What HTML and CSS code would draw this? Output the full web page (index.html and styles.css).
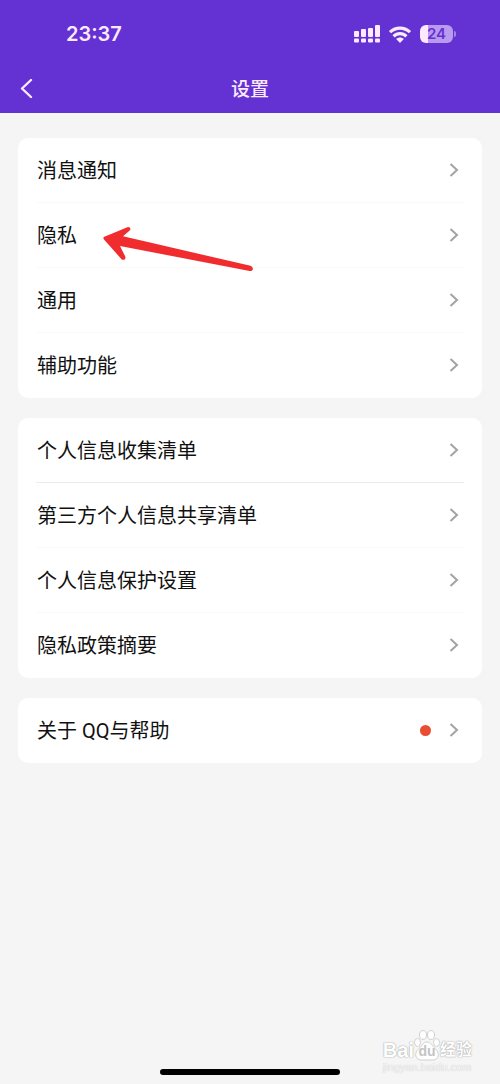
FILE: index.html
```
<!DOCTYPE html>
<html lang="zh-CN">
<head>
    <meta charset="UTF-8">
    <meta name="viewport" content="width=device-width, initial-scale=1.0">
    <title>设置</title>
    <link rel="stylesheet" href="styles.css">
</head>
<body>
    <header class="header">
        <div class="status-bar">
            <span class="time">23:37</span>
            <div class="status-icons">
                <svg class="signal" width="26" height="18" viewBox="0 0 26 18" fill="#fbeaff">
                    <rect x="0" y="6" width="5" height="6" rx="1"/>
                    <rect x="7" y="4" width="5" height="8" rx="1"/>
                    <rect x="14" y="3" width="5" height="9" rx="1"/>
                    <rect x="21" y="0" width="5" height="12" rx="1"/>
                    <rect x="0" y="13.5" width="5" height="4" rx="1"/>
                    <rect x="7" y="13.5" width="5" height="4" rx="1"/>
                    <rect x="14" y="13.5" width="5" height="4" rx="1"/>
                    <rect x="21" y="13.5" width="5" height="4" rx="1"/>
                </svg>
                <svg class="wifi" width="22" height="17" viewBox="0 0 22 17" fill="none" stroke="#fbeaff" stroke-width="3.2">
                    <path d="M1 6.2C6.800 .7 15.200 .7 21 6.200"/>
                    <path d="M4.600 10.400c3.700-3.700 9.100-3.700 12.800 0"/>
                    <path d="M7.200 12.900c2.200-2 5.400-2 7.600 0L11 16.900z" fill="#fbeaff" stroke="none"/>
                </svg>
                <div class="battery"><span class="level">24</span></div>
            </div>
        </div>
        <nav class="nav-bar">
            <button class="back" aria-label="返回">
                <svg width="14" height="20" viewBox="0 0 14 20" fill="none" stroke="#fbeaff" stroke-width="2.400" stroke-linecap="round" stroke-linejoin="round">
                    <path d="M12 1 3 9.500l9 8.500"/>
                </svg>
            </button>
            <h1>设置</h1>
        </nav>
    </header>

    <main class="settings">
        <section class="card">
            <a class="row" href="#notice"><span>消息通知</span><svg class="chevron" viewBox="0 0 10 14"><path d="M1.500 1 8 7l-6.500 6"/></svg></a>
            <a class="row" href="#privacy"><span>隐私</span><svg class="chevron" viewBox="0 0 10 14"><path d="M1.500 1 8 7l-6.500 6"/></svg>
                <svg class="pointer" width="152" height="46" viewBox="0 0 152 46" fill="#f02c2e">
                    <path d="M.8 11 25 1q3.500.4 2 3.200L20 10.300 147.500 39.800q3 1.300 2.200 4-1 1.500-3 1.200L17 20l5.500 11q0 3.500-3.500 2.700L1 13.500q-1-1.500-.2-2.500z"/>
                </svg>
            </a>
            <a class="row" href="#general"><span>通用</span><svg class="chevron" viewBox="0 0 10 14"><path d="M1.500 1 8 7l-6.500 6"/></svg></a>
            <a class="row" href="#accessibility"><span>辅助功能</span><svg class="chevron" viewBox="0 0 10 14"><path d="M1.500 1 8 7l-6.500 6"/></svg></a>
        </section>

        <section class="card">
            <a class="row strong" href="#collect"><span>个人信息收集清单</span><svg class="chevron" viewBox="0 0 10 14"><path d="M1.500 1 8 7l-6.500 6"/></svg></a>
            <a class="row" href="#share"><span>第三方个人信息共享清单</span><svg class="chevron" viewBox="0 0 10 14"><path d="M1.500 1 8 7l-6.500 6"/></svg></a>
            <a class="row" href="#protect"><span>个人信息保护设置</span><svg class="chevron" viewBox="0 0 10 14"><path d="M1.500 1 8 7l-6.500 6"/></svg></a>
            <a class="row" href="#policy"><span>隐私政策摘要</span><svg class="chevron" viewBox="0 0 10 14"><path d="M1.500 1 8 7l-6.500 6"/></svg></a>
        </section>

        <section class="card">
            <a class="row" href="#about"><span>关于 QQ与帮助</span><i class="dot"></i><svg class="chevron" viewBox="0 0 10 14"><path d="M1.500 1 8 7l-6.500 6"/></svg></a>
        </section>
    </main>

    <div class="watermark">
        <div class="brand">
            <span>Bai</span>
            <span class="paw">
                <svg width="26" height="31" viewBox="0 0 26 31" fill="#fff" stroke="#d0d0d0">
                    <ellipse cx="3.500" cy="12.500" rx="3" ry="4"/>
                    <ellipse cx="9" cy="5" rx="3.500" ry="4.400"/>
                    <ellipse cx="17" cy="5" rx="3.500" ry="4.400"/>
                    <ellipse cx="22.500" cy="12.500" rx="3" ry="4"/>
                    <path d="M13 12c4 0 5 4 8 6.500 6 5 3 11.500-2 11.500H7c-5 0-8-6.500-2-11.500C8 16 9 12 13 12z"/>
                </svg>
                <b>du</b>
            </span>
            <span class="cn">经验</span>
        </div>
        <div class="site">jingyan.baidu.com</div>
    </div>
    <div class="home-bar"></div>
</body>
</html>
```
FILE: styles.css
```
* {
    box-sizing: border-box;
}
body {
    margin: 0;
    min-height: 100vh;
    display: flex;
    flex-direction: column;
    position: relative;
    font-family: Roboto, "Noto Sans CJK SC", sans-serif;
    background-color: #f5f5f5;
    color: #111;
}
.header {
    background-color: #6431d3;
    color: #fbeaff;
}
.status-bar {
    display: flex;
    justify-content: space-between;
    align-items: center;
    height: 64px;
    padding: 4px 44px 0 66px;
}
.time {
    font-family: Inter, sans-serif;
    font-size: 20px;
    font-weight: 600;
}
.status-icons {
    display: flex;
    align-items: center;
    gap: 9px;
}
.battery {
    position: relative;
    width: 33px;
    height: 18px;
    margin-right: 3px;
    border-radius: 6px;
    background: linear-gradient(to right, #fbeaff 8px, #b99aef 8px);
    text-align: center;
}
.battery::after {
    content: "";
    position: absolute;
    right: -3px;
    top: 6px;
    width: 2px;
    height: 6px;
    border-radius: 0 2px 2px 0;
    background-color: #a583e8;
}
.level {
    display: block;
    font-family: Inter, sans-serif;
    font-size: 15px;
    font-weight: 600;
    line-height: 18px;
    color: #6431d3;
}
.nav-bar {
    display: grid;
    grid-template-columns: 40px 1fr 40px;
    align-items: center;
    height: 49px;
    padding: 0 8px;
}
.back {
    display: flex;
    padding: 0 11px;
    border: 0;
    background: none;
    cursor: pointer;
}
.nav-bar h1 {
    margin: 0;
    padding-top: 2px;
    font-size: 19px;
    font-weight: 500;
    line-height: 28px;
    text-align: center;
}
.settings {
    flex: 1;
    display: flex;
    flex-direction: column;
    gap: 20px;
    padding: 25px 18px;
}
.card {
    border-radius: 10px;
    background-color: #fff;
}
.row {
    position: relative;
    display: flex;
    align-items: center;
    height: 65px;
    margin: 0 18px;
    padding: 0 5px 0 1px;
    border-bottom: 1px solid #fafafa;
    font-size: 20px;
    line-height: 28px;
    color: #111;
    text-decoration: none;
}
.row.strong {
    border-bottom-color: #ececec;
}
.row:last-child {
    border-bottom-color: transparent;
}
.row span {
    flex: 1;
    padding-top: 2px;
}
.chevron {
    width: 10px;
    height: 14px;
    fill: none;
    stroke: #a3a3a3;
    stroke-width: 2;
}
.dot {
    width: 11px;
    height: 11px;
    margin-right: 18px;
    border-radius: 50%;
    background-color: #e84f32;
}
/* red arrow drawn over the privacy row */
.pointer {
    position: absolute;
    z-index: 1;
    left: 67px;
    top: 23px;
}
.watermark {
    position: absolute;
    right: 28px;
    bottom: 10px;
    font-family: "Liberation Sans", "Noto Sans CJK SC", sans-serif;
    color: #fff;
    text-shadow: 0 0 1px #999, 0 0 2px #bbb;
}
.brand {
    display: flex;
    align-items: flex-end;
    font-size: 20px;
    font-weight: bold;
    line-height: 22px;
}
.paw {
    position: relative;
    height: 31px;
}
.paw svg {
    display: block;
}
.paw b {
    position: absolute;
    left: 0;
    right: 0;
    bottom: 2px;
    font-size: 14px;
    line-height: 16px;
    text-align: center;
    text-shadow: none;
    color: #c4c4c4;
}
.cn {
    font-size: 16px;
}
.site {
    font-size: 11px;
    line-height: 13px;
    color: #f5f5f5;
    text-shadow: 0 0 1px #bbb;
}
.home-bar {
    width: 36%;
    height: 6px;
    margin: 0 auto 9px;
    border-radius: 3px;
    background-color: #000;
}
```
